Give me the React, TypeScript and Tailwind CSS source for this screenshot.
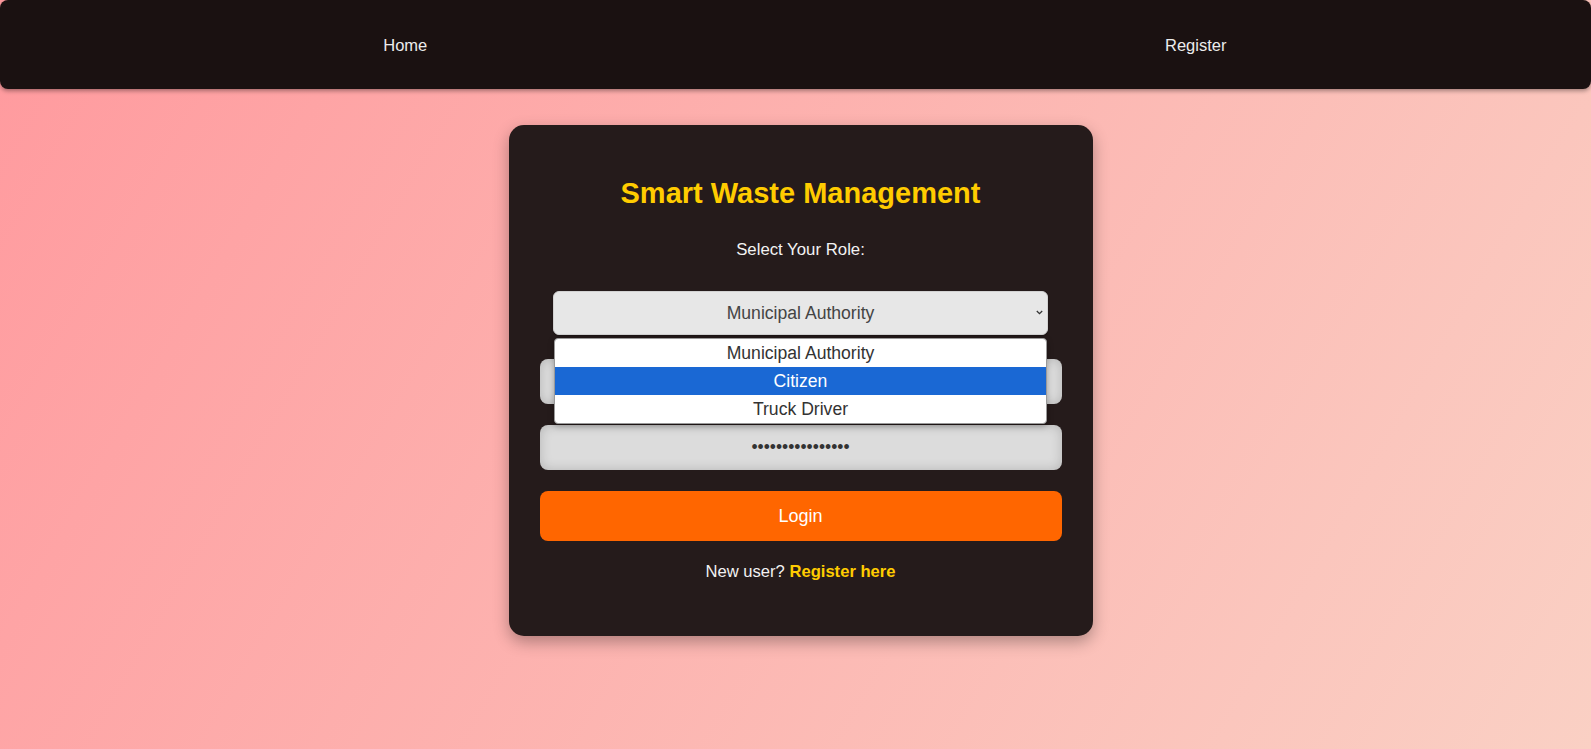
import { ReactElement } from 'react';

const roles = ['Municipal Authority', 'Citizen', 'Truck Driver'];

const NavBar = (): ReactElement => (
  <nav className="flex h-[89px] items-center rounded-lg bg-[#1a1111] pl-[10px] shadow-[0_2px_4px_rgba(0,0,0,0.35)]">
    <a href="#" className="flex-1 pt-[2px] text-center text-[16.5px] text-[#ececec]">
      Home
    </a>
    <a href="#" className="flex-1 pt-[2px] text-center text-[16.5px] text-[#ececec]">
      Register
    </a>
  </nav>
);

const RoleSelect = (): ReactElement => {
  // the list is drawn open, the way the screenshot caught it
  const selected = roles[0];
  const highlighted = roles[1];

  return (
    <div className="relative mx-auto mt-[31px] w-[495px]">
      <select
        defaultValue={selected}
        className="block h-[44px] w-full appearance-none rounded-[6px] border border-[#d2d2d2] bg-[#e7e7e7] text-center text-[17.6px] text-[#444] shadow-[0_1px_2px_rgba(0,0,0,0.3)] outline-none [text-align-last:center]"
      >
        {roles.map((role) => (
          <option key={role} value={role}>
            {role}
          </option>
        ))}
      </select>
      <svg
        className="pointer-events-none absolute right-[5px] top-[19px]"
        width="7"
        height="5"
        viewBox="0 0 7 5"
      >
        <path d="M0.8 1 L3.5 3.7 L6.2 1" fill="none" stroke="#333" strokeWidth="1.3" />
      </svg>
      <ul className="absolute left-[1px] right-[1px] top-[47px] z-10 overflow-hidden rounded-[4px] border border-[#9a9a9a] bg-white shadow-[0_2px_6px_rgba(0,0,0,0.3)]">
        {roles.map((role) => (
          <li
            key={role}
            className={
              role === highlighted
                ? 'h-[28px] bg-[#1a68d4] text-center text-[17.6px] leading-[28px] text-white'
                : 'h-[28px] text-center text-[17.6px] leading-[28px] text-[#333]'
            }
          >
            {role}
          </li>
        ))}
      </ul>
    </div>
  );
};

const LoginCard = (): ReactElement => (
  <div className="w-[584px] rounded-[15px] bg-[#251b1b] px-[31px] pb-[54px] pt-[51px] shadow-[0_6px_16px_rgba(0,0,0,0.3)]">
    <h2 className="text-center text-[29px] font-bold leading-[34px] text-[#ffcc00]">
      Smart Waste Management
    </h2>
    <p className="mt-[30px] text-center text-[16.8px] leading-[20px] text-[#f2f2f2]">
      Select Your Role:
    </p>
    <RoleSelect />
    <input
      type="text"
      placeholder="Username"
      className="mt-[24px] block h-[45px] w-full rounded-[8px] bg-[#dcdcdc] text-center text-[17.5px] text-[#333] shadow-[inset_0_0_12px_rgba(0,0,0,0.18)] outline-none"
    />
    <input
      type="password"
      defaultValue="passwordpassword"
      readOnly
      className="mt-[21px] block h-[45px] w-full rounded-[8px] bg-[#dcdcdc] text-center text-[17.5px] text-[#333] shadow-[inset_0_0_12px_rgba(0,0,0,0.18)] outline-none"
    />
    <button
      type="button"
      className="mt-[21px] block h-[50px] w-full rounded-[8px] bg-[#ff6600] text-[18px] text-white"
    >
      Login
    </button>
    <p className="mt-[21px] text-center text-[16.6px] leading-[20px] text-[#f2f2f2]">
      New user?{' '}
      <a href="#" className="font-bold text-[#ffcc00]">
        Register here
      </a>
    </p>
  </div>
);

export default function App(): ReactElement {
  return (
    <div className="min-h-[749px] bg-[linear-gradient(120deg,#ff9a9e_0%,#fad0c4_100%)] font-['Liberation_Sans',Arial,sans-serif]">
      <NavBar />
      <main className="flex justify-center pl-[10px] pt-[36px]">
        <LoginCard />
      </main>
    </div>
  );
}
